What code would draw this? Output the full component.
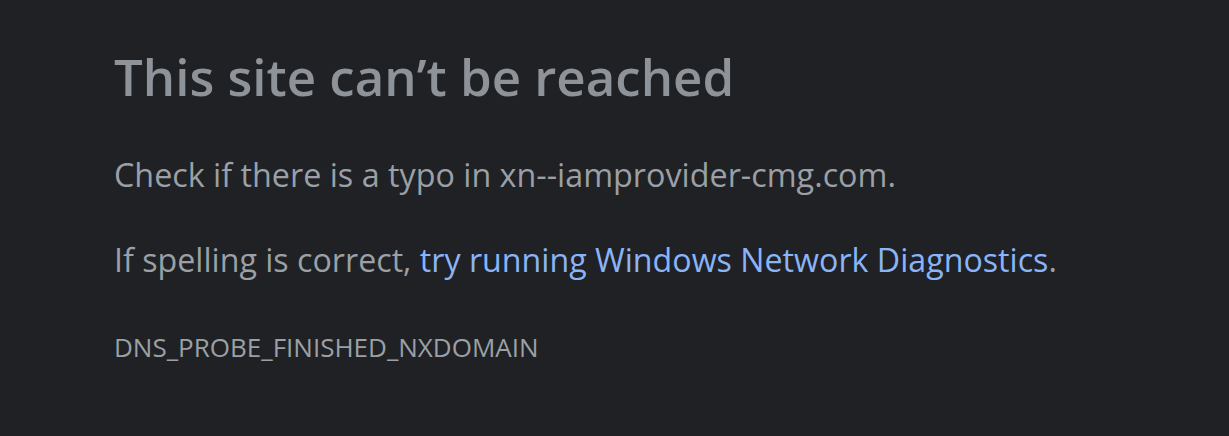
export default function App() {
  return (
    <div className="min-h-screen w-full bg-[#202124] font-['Open_Sans',sans-serif] text-[#9aa0a6]">
      <div className="pl-[114px] pt-[44px]">
        {/* Heading */}
        <h1 className="text-[51px] font-semibold leading-[64px] text-[#8e9299]">
          This site can’t be reached
        </h1>

        {/* Body */}
        <p className="mt-[46px] text-[32.3px] leading-[40px]">
          Check if there is a typo in xn--iamprovider-cmg.com.
        </p>
        <p className="mt-[46px] text-[32.2px] leading-[40px]">
          If spelling is correct,{" "}
          <span className="text-[#8ab4f8]">try running Windows Network Diagnostics</span>.
        </p>

        {/* Error code */}
        <div className="mt-[51px] text-[26px] leading-[32px]">DNS_PROBE_FINISHED_NXDOMAIN</div>
      </div>
    </div>
  );
}
